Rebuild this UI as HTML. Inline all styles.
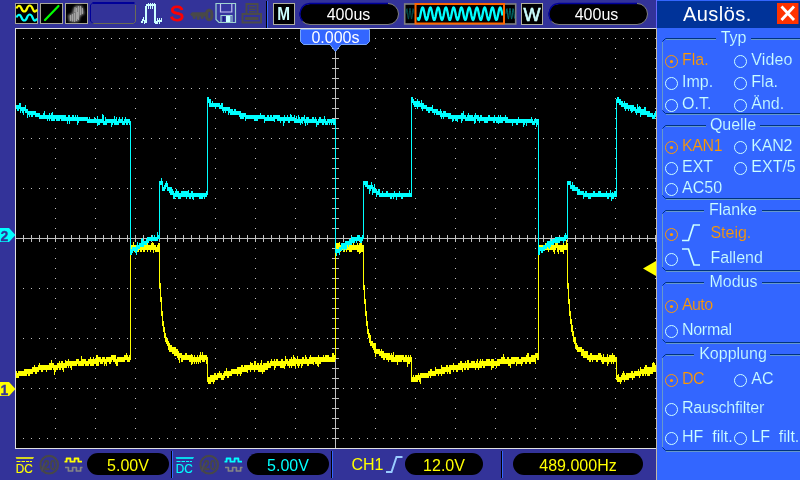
<!DOCTYPE html>
<html><head><meta charset="utf-8"><title>Scope</title>
<style>
html,body{margin:0;padding:0;}
body{width:800px;height:480px;overflow:hidden;background:#333399;position:relative;font-family:"Liberation Sans",Arial,sans-serif;font-size:16px;}
svg{position:absolute;left:0;top:0;will-change:transform;}
svg text{font-family:"Liberation Sans",Arial,sans-serif;font-size:16px;}
.lt{fill:#ccffff;stroke:#3366ff;stroke-width:0.15px;}
.on{fill:#ff9900;stroke:#3366ff;stroke-width:0.15px;}
.pill{position:absolute;background:#000;border-radius:11px;height:22px;box-sizing:border-box;text-align:center;line-height:22px;font-size:16px;}
.pill.top{border:1px solid;border-color:#000099 #808080 #808080 #000099;line-height:20px;color:#fff;}
.y{color:#ffff00;}
.c{color:#00ffff;}
</style></head><body>

<!-- right panel background -->
<div style="position:absolute;left:656px;top:0;width:144px;height:480px;background:#3366ff;"></div>
<div style="position:absolute;left:657px;top:1px;width:143px;height:27px;background:#003399;"></div>
<div style="position:absolute;left:656px;top:0;width:1px;height:28px;background:#6666ff;"></div>

<svg width="800" height="480" viewBox="0 0 800 480" shape-rendering="crispEdges">
  <rect x="15" y="28" width="641" height="421" fill="#e0e0e0"/>
  <rect x="16" y="29" width="640" height="419" fill="#000"/>
  <rect x="656" y="28" width="1" height="452" fill="#c0b8a8"/>
  <g stroke="#c0c0c0" stroke-width="1" fill="none">
    <path stroke-dasharray="1 7" d="M23 38.5H656M23 88.5H656M23 138.5H656M23 188.5H656M23 288.5H656M23 338.5H656M23 388.5H656M23 438.5H656"/>
    <path stroke-dasharray="1 9" d="M55.5 38V448M95.5 38V448M135.5 38V448M175.5 38V448M215.5 38V448M255.5 38V448M295.5 38V448M375.5 38V448M415.5 38V448M455.5 38V448M495.5 38V448M535.5 38V448M575.5 38V448M615.5 38V448M655.5 38V448"/>
    <path d="M16 238.5H656M335.5 29V448"/>
    <path stroke-dasharray="1 7" stroke-width="7" d="M23 238.5H656"/>
    <path stroke-dasharray="1 9" stroke-width="7" d="M335.5 38V448"/>
  </g>
  <path stroke="#ffff00" stroke-width="1" fill="none" d="M16.5 371V378M17.5 373V378M18.5 371V378M19.5 371V376M20.5 371V376M21.5 371V376M22.5 371V376M23.5 371V376M24.5 369V376M25.5 369V376M26.5 369V376M27.5 369V374M28.5 369V376M29.5 369V376M30.5 369V374M31.5 369V374M32.5 367V374M33.5 367V372M34.5 365V372M35.5 367V374M36.5 367V374M37.5 367V372M38.5 365V372M39.5 363V370M40.5 365V370M41.5 365V372M42.5 365V372M43.5 365V370M44.5 365V370M45.5 365V370M46.5 365V372M47.5 365V370M48.5 365V370M49.5 363V370M50.5 363V370M51.5 360V370M52.5 363V368M53.5 363V370M54.5 365V375M55.5 365V372M56.5 365V370M57.5 363V370M58.5 363V368M59.5 361V370M60.5 363V370M61.5 361V368M62.5 361V370M63.5 363V372M64.5 363V368M65.5 360V368M66.5 361V368M67.5 361V366M68.5 359V368M69.5 361V366M70.5 361V368M71.5 361V370M72.5 361V366M73.5 361V366M74.5 361V366M75.5 361V366M76.5 359V366M77.5 359V364M78.5 359V366M79.5 361V366M80.5 361V366M81.5 356V366M82.5 359V366M83.5 359V366M84.5 359V364M85.5 359V366M86.5 361V366M87.5 361V366M88.5 359V366M89.5 359V364M90.5 357V366M91.5 359V366M92.5 359V366M93.5 357V366M94.5 359V364M95.5 359V364M96.5 355V366M97.5 355V366M98.5 357V366M99.5 357V362M100.5 357V364M101.5 359V364M102.5 357V364M103.5 357V362M104.5 357V366M105.5 359V364M106.5 357V366M107.5 357V362M108.5 357V362M109.5 357V364M110.5 357V364M111.5 355V362M112.5 355V360M113.5 355V362M114.5 355V362M115.5 355V364M116.5 359V366M117.5 357V366M118.5 357V362M119.5 357V362M120.5 357V362M121.5 357V362M122.5 357V362M123.5 357V362M124.5 355V362M125.5 355V360M126.5 353V360M127.5 355V362M128.5 357V362M129.5 355V362M130.5 245V360M131.5 245V252M132.5 245V252M133.5 242V250M134.5 245V252M135.5 245V250M136.5 245V250M137.5 245V252M138.5 245V252M139.5 245V250M140.5 245V252M141.5 245V252M142.5 243V250M143.5 241V252M144.5 243V252M145.5 241V250M146.5 243V250M147.5 243V252M148.5 245V250M149.5 245V250M150.5 245V252M151.5 243V250M152.5 242V250M153.5 243V253M154.5 245V250M155.5 245V252M156.5 247V252M157.5 245V252M158.5 243V252M159.5 243V288M160.5 283V302M161.5 297V316M162.5 311V326M163.5 321V332M164.5 327V338M165.5 333V342M166.5 337V344M167.5 339V346M168.5 341V350M169.5 343V352M170.5 345V352M171.5 345V352M172.5 347V354M173.5 347V354M174.5 347V356M175.5 347V356M176.5 349V356M177.5 349V358M178.5 351V360M179.5 353V363M180.5 353V358M181.5 353V362M182.5 355V362M183.5 355V360M184.5 355V360M185.5 353V360M186.5 353V360M187.5 355V360M188.5 355V360M189.5 355V362M190.5 355V362M191.5 354V365M192.5 355V364M193.5 357V362M194.5 355V364M195.5 357V362M196.5 357V364M197.5 355V362M198.5 357V364M199.5 355V362M200.5 352V363M201.5 355V360M202.5 352V362M203.5 355V362M204.5 355V362M205.5 355V360M206.5 355V364M207.5 357V382M208.5 377V384M209.5 377V384M210.5 375V384M211.5 375V382M212.5 375V382M213.5 375V384M214.5 373V382M215.5 373V380M216.5 375V380M217.5 373V380M218.5 373V378M219.5 371V378M220.5 373V378M221.5 373V380M222.5 375V380M223.5 373V380M224.5 371V378M225.5 371V376M226.5 368V376M227.5 371V378M228.5 371V378M229.5 371V376M230.5 371V376M231.5 369V376M232.5 369V374M233.5 369V374M234.5 369V374M235.5 369V374M236.5 369V374M237.5 367V376M238.5 367V374M239.5 367V374M240.5 367V376M241.5 365V374M242.5 365V372M243.5 367V372M244.5 365V372M245.5 365V372M246.5 365V372M247.5 365V373M248.5 365V370M249.5 365V370M250.5 362V372M251.5 363V370M252.5 363V370M253.5 365V370M254.5 361V372M255.5 361V370M256.5 365V370M257.5 363V370M258.5 363V372M259.5 365V372M260.5 363V372M261.5 360V372M262.5 365V374M263.5 363V372M264.5 363V372M265.5 363V370M266.5 363V370M267.5 361V370M268.5 361V368M269.5 363V368M270.5 361V368M271.5 359V366M272.5 361V366M273.5 361V366M274.5 359V370M275.5 361V368M276.5 359V366M277.5 359V366M278.5 361V366M279.5 361V366M280.5 361V368M281.5 359V368M282.5 359V368M283.5 361V368M284.5 361V369M285.5 356V366M286.5 359V364M287.5 359V366M288.5 361V366M289.5 359V368M290.5 359V366M291.5 357V368M292.5 359V366M293.5 355V366M294.5 357V366M295.5 359V368M296.5 359V364M297.5 356V366M298.5 359V368M299.5 359V366M300.5 359V364M301.5 359V368M302.5 357V366M303.5 357V364M304.5 359V364M305.5 355V364M306.5 357V364M307.5 359V366M308.5 359V366M309.5 357V364M310.5 355V364M311.5 357V364M312.5 357V364M313.5 357V365M314.5 357V362M315.5 357V364M316.5 357V364M317.5 357V366M318.5 355V367M319.5 357V364M320.5 357V364M321.5 357V362M322.5 357V362M323.5 355V362M324.5 357V362M325.5 355V362M326.5 355V362M327.5 355V362M328.5 355V362M329.5 357V362M330.5 357V362M331.5 357V362M332.5 353V362M333.5 353V362M334.5 355V362M335.5 245V360M336.5 243V252M337.5 243V252M338.5 243V252M339.5 242V250M340.5 245V252M341.5 243V250M342.5 243V250M343.5 245V252M344.5 245V252M345.5 245V250M346.5 243V252M347.5 243V250M348.5 243V250M349.5 241V252M350.5 245V252M351.5 243V252M352.5 245V250M353.5 243V250M354.5 245V250M355.5 245V250M356.5 245V250M357.5 243V252M358.5 245V252M359.5 243V254M360.5 243V253M361.5 243V252M362.5 245V252M363.5 245V290M364.5 285V304M365.5 299V316M366.5 311V326M367.5 321V334M368.5 329V338M369.5 333V343M370.5 335V346M371.5 341V346M372.5 341V348M373.5 343V350M374.5 343V353M375.5 343V357M376.5 349V354M377.5 349V354M378.5 349V354M379.5 349V356M380.5 351V356M381.5 349V358M382.5 351V358M383.5 351V360M384.5 353V360M385.5 353V358M386.5 353V360M387.5 353V360M388.5 353V362M389.5 353V360M390.5 355V360M391.5 353V362M392.5 355V362M393.5 352V362M394.5 357V362M395.5 355V362M396.5 355V362M397.5 355V365M398.5 355V362M399.5 355V362M400.5 355V362M401.5 355V362M402.5 355V360M403.5 355V362M404.5 357V362M405.5 355V362M406.5 355V362M407.5 357V367M408.5 355V364M409.5 357V364M410.5 355V362M411.5 357V382M412.5 377V382M413.5 375V382M414.5 377V382M415.5 375V382M416.5 375V382M417.5 375V382M418.5 373V380M419.5 375V382M420.5 373V384M421.5 373V378M422.5 373V378M423.5 373V378M424.5 373V378M425.5 373V378M426.5 373V378M427.5 373V378M428.5 371V378M429.5 371V376M430.5 369V378M431.5 369V376M432.5 371V376M433.5 371V376M434.5 371V376M435.5 367V376M436.5 369V374M437.5 369V374M438.5 369V376M439.5 369V374M440.5 369V374M441.5 365V376M442.5 367V374M443.5 367V374M444.5 367V374M445.5 367V372M446.5 365V372M447.5 365V374M448.5 367V372M449.5 365V374M450.5 365V374M451.5 365V370M452.5 365V370M453.5 363V372M454.5 365V370M455.5 365V370M456.5 365V372M457.5 365V372M458.5 363V370M459.5 363V370M460.5 361V370M461.5 361V370M462.5 363V372M463.5 363V368M464.5 363V370M465.5 361V370M466.5 363V368M467.5 360V370M468.5 360V370M469.5 363V368M470.5 363V368M471.5 361V368M472.5 361V368M473.5 361V368M474.5 361V368M475.5 363V370M476.5 361V368M477.5 359V368M478.5 363V370M479.5 361V368M480.5 359V368M481.5 361V368M482.5 359V366M483.5 361V368M484.5 361V368M485.5 361V366M486.5 359V366M487.5 359V366M488.5 359V366M489.5 359V366M490.5 361V366M491.5 359V370M492.5 359V368M493.5 359V368M494.5 361V366M495.5 361V366M496.5 361V368M497.5 359V366M498.5 359V366M499.5 359V366M500.5 359V364M501.5 357V364M502.5 357V364M503.5 354V364M504.5 357V364M505.5 359V364M506.5 359V364M507.5 357V364M508.5 357V366M509.5 359V366M510.5 359V368M511.5 357V364M512.5 357V364M513.5 357V364M514.5 357V364M515.5 357V362M516.5 357V366M517.5 357V364M518.5 357V364M519.5 359V364M520.5 359V364M521.5 357V366M522.5 357V364M523.5 357V362M524.5 357V362M525.5 357V364M526.5 355V364M527.5 353V362M528.5 353V362M529.5 357V364M530.5 357V364M531.5 355V362M532.5 355V362M533.5 355V362M534.5 355V362M535.5 353V364M536.5 353V358M537.5 353V360M538.5 245V360M539.5 245V252M540.5 245V250M541.5 245V250M542.5 245V250M543.5 245V250M544.5 245V250M545.5 243V250M546.5 245V250M547.5 243V250M548.5 243V252M549.5 243V250M550.5 241V250M551.5 245V250M552.5 245V250M553.5 245V252M554.5 245V254M555.5 243V250M556.5 243V248M557.5 243V252M558.5 245V254M559.5 245V250M560.5 245V252M561.5 245V252M562.5 245V252M563.5 243V254M564.5 245V250M565.5 245V250M566.5 240V250M567.5 243V288M568.5 283V304M569.5 299V316M570.5 311V324M571.5 319V332M572.5 325V336M573.5 331V342M574.5 337V344M575.5 337V348M576.5 343V350M577.5 345V352M578.5 347V352M579.5 347V352M580.5 347V352M581.5 347V356M582.5 349V356M583.5 349V358M584.5 351V358M585.5 351V358M586.5 351V358M587.5 351V360M588.5 355V360M589.5 355V362M590.5 353V362M591.5 353V360M592.5 355V362M593.5 355V360M594.5 355V360M595.5 355V360M596.5 355V362M597.5 355V362M598.5 353V360M599.5 353V360M600.5 353V360M601.5 355V362M602.5 357V364M603.5 354V364M604.5 357V362M605.5 357V362M606.5 357V362M607.5 354V366M608.5 357V364M609.5 355V362M610.5 355V362M611.5 355V364M612.5 353V362M613.5 355V364M614.5 355V362M615.5 357V362M616.5 357V380M617.5 375V382M618.5 374V382M619.5 377V382M620.5 377V384M621.5 375V382M622.5 373V380M623.5 371V380M624.5 373V382M625.5 375V380M626.5 373V380M627.5 373V380M628.5 373V380M629.5 373V378M630.5 373V378M631.5 371V378M632.5 371V380M633.5 373V378M634.5 371V378M635.5 371V376M636.5 371V376M637.5 371V376M638.5 369V376M639.5 371V378M640.5 367V376M641.5 369V374M642.5 369V376M643.5 369V376M644.5 367V374M645.5 365V376M646.5 365V374M647.5 367V376M648.5 367V376M649.5 367V376M650.5 367V374M651.5 367V374M652.5 363V374M653.5 362V372M654.5 363V372M655.5 365V372"/>
  <path stroke="#00ffff" stroke-width="1" fill="none" d="M16.5 105V109M17.5 105V111M18.5 105V111M19.5 103V109M20.5 103V113M21.5 107V111M22.5 107V113M23.5 107V115M24.5 107V111M25.5 105V113M26.5 109V113M27.5 109V118M28.5 111V115M29.5 111V117M30.5 111V115M31.5 111V117M32.5 111V117M33.5 111V115M34.5 111V115M35.5 111V117M36.5 113V117M37.5 113V117M38.5 113V117M39.5 113V119M40.5 115V119M41.5 115V119M42.5 115V119M43.5 113V119M44.5 111V119M45.5 115V119M46.5 115V119M47.5 115V121M48.5 115V119M49.5 113V121M50.5 115V119M51.5 113V121M52.5 112V121M53.5 115V121M54.5 115V121M55.5 115V119M56.5 115V121M57.5 115V121M58.5 115V121M59.5 115V121M60.5 115V119M61.5 115V121M62.5 115V121M63.5 115V121M64.5 115V121M65.5 115V121M66.5 117V121M67.5 117V124M68.5 115V121M69.5 115V124M70.5 117V121M71.5 117V121M72.5 115V121M73.5 115V121M74.5 117V121M75.5 115V121M76.5 117V121M77.5 115V125M78.5 117V123M79.5 117V121M80.5 117V121M81.5 117V121M82.5 117V121M83.5 117V121M84.5 117V121M85.5 117V121M86.5 117V121M87.5 117V123M88.5 119V123M89.5 117V123M90.5 119V123M91.5 119V123M92.5 119V123M93.5 119V123M94.5 117V123M95.5 119V123M96.5 119V123M97.5 116V126M98.5 119V125M99.5 119V125M100.5 119V123M101.5 119V123M102.5 114V123M103.5 115V125M104.5 121V125M105.5 117V125M106.5 119V125M107.5 119V123M108.5 119V123M109.5 119V123M110.5 119V123M111.5 119V127M112.5 119V125M113.5 119V123M114.5 116V125M115.5 119V125M116.5 117V125M117.5 121V125M118.5 119V125M119.5 117V123M120.5 119V123M121.5 119V123M122.5 117V125M123.5 121V125M124.5 119V125M125.5 117V123M126.5 119V125M127.5 119V125M128.5 119V123M129.5 119V125M130.5 121V255M131.5 249V255M132.5 247V253M133.5 247V251M134.5 247V251M135.5 247V253M136.5 245V255M137.5 242V251M138.5 245V249M139.5 243V249M140.5 243V247M141.5 239V247M142.5 238V247M143.5 241V247M144.5 241V245M145.5 241V245M146.5 239V245M147.5 237V243M148.5 237V243M149.5 237V241M150.5 237V241M151.5 237V241M152.5 235V241M153.5 237V241M154.5 235V241M155.5 237V241M156.5 237V241M157.5 232V241M158.5 235V239M159.5 181V239M160.5 181V185M161.5 178V185M162.5 181V191M163.5 187V191M164.5 185V191M165.5 183V189M166.5 181V187M167.5 183V191M168.5 187V191M169.5 187V193M170.5 187V195M171.5 187V195M172.5 189V195M173.5 191V199M174.5 193V199M175.5 191V197M176.5 189V197M177.5 191V197M178.5 191V199M179.5 193V199M180.5 193V199M181.5 191V197M182.5 191V197M183.5 191V197M184.5 191V197M185.5 191V197M186.5 191V199M187.5 191V197M188.5 190V197M189.5 193V199M190.5 193V199M191.5 191V197M192.5 191V199M193.5 193V200M194.5 193V197M195.5 193V197M196.5 193V197M197.5 193V197M198.5 193V197M199.5 193V199M200.5 193V199M201.5 193V199M202.5 193V199M203.5 193V197M204.5 193V199M205.5 193V197M206.5 191V197M207.5 97V195M208.5 97V103M209.5 99V107M210.5 99V107M211.5 103V107M212.5 101V107M213.5 103V107M214.5 103V107M215.5 103V109M216.5 103V107M217.5 103V107M218.5 103V107M219.5 103V109M220.5 105V109M221.5 103V109M222.5 103V111M223.5 107V113M224.5 107V111M225.5 107V113M226.5 107V111M227.5 107V111M228.5 107V115M229.5 107V113M230.5 109V115M231.5 109V115M232.5 109V115M233.5 111V115M234.5 109V115M235.5 109V115M236.5 111V115M237.5 111V115M238.5 111V115M239.5 111V117M240.5 111V119M241.5 113V119M242.5 113V119M243.5 113V119M244.5 113V117M245.5 113V121M246.5 115V119M247.5 115V119M248.5 115V119M249.5 115V119M250.5 115V119M251.5 115V119M252.5 115V119M253.5 115V119M254.5 115V121M255.5 115V121M256.5 115V121M257.5 115V121M258.5 115V119M259.5 115V119M260.5 113V119M261.5 115V119M262.5 115V119M263.5 115V119M264.5 115V123M265.5 117V121M266.5 117V121M267.5 115V121M268.5 115V121M269.5 117V121M270.5 115V121M271.5 115V121M272.5 117V121M273.5 115V121M274.5 115V122M275.5 115V119M276.5 115V119M277.5 115V121M278.5 115V121M279.5 115V121M280.5 117V123M281.5 117V121M282.5 117V121M283.5 117V126M284.5 115V123M285.5 117V121M286.5 117V121M287.5 115V121M288.5 117V123M289.5 117V123M290.5 114V121M291.5 115V121M292.5 117V121M293.5 117V121M294.5 115V123M295.5 119V123M296.5 116V123M297.5 119V123M298.5 115V123M299.5 117V123M300.5 119V125M301.5 117V123M302.5 117V124M303.5 117V121M304.5 115V123M305.5 119V126M306.5 117V123M307.5 117V125M308.5 117V123M309.5 119V123M310.5 119V123M311.5 119V123M312.5 117V123M313.5 117V123M314.5 119V123M315.5 117V123M316.5 119V127M317.5 121V125M318.5 119V125M319.5 117V123M320.5 117V123M321.5 119V123M322.5 119V125M323.5 119V125M324.5 116V123M325.5 119V125M326.5 121V125M327.5 119V125M328.5 119V123M329.5 119V125M330.5 119V123M331.5 119V125M332.5 119V123M333.5 119V125M334.5 119V125M335.5 119V253M336.5 249V256M337.5 249V253M338.5 249V253M339.5 247V255M340.5 247V251M341.5 243V251M342.5 243V249M343.5 243V251M344.5 243V249M345.5 241V250M346.5 241V249M347.5 241V245M348.5 241V247M349.5 239V245M350.5 239V245M351.5 236V245M352.5 237V243M353.5 237V243M354.5 237V243M355.5 237V241M356.5 237V243M357.5 235V241M358.5 235V241M359.5 235V241M360.5 237V243M361.5 237V243M362.5 235V241M363.5 181V239M364.5 181V185M365.5 181V187M366.5 181V187M367.5 181V189M368.5 185V189M369.5 185V194M370.5 185V191M371.5 182V189M372.5 185V195M373.5 187V193M374.5 184V193M375.5 189V193M376.5 189V197M377.5 191V195M378.5 189V195M379.5 189V197M380.5 193V197M381.5 193V197M382.5 191V197M383.5 193V197M384.5 193V197M385.5 193V197M386.5 191V197M387.5 191V197M388.5 193V197M389.5 193V197M390.5 193V199M391.5 193V199M392.5 193V197M393.5 193V199M394.5 191V197M395.5 193V197M396.5 193V200M397.5 193V197M398.5 193V197M399.5 191V197M400.5 193V197M401.5 193V199M402.5 193V199M403.5 193V197M404.5 193V197M405.5 193V197M406.5 193V197M407.5 193V197M408.5 193V197M409.5 190V197M410.5 193V197M411.5 97V197M412.5 97V103M413.5 99V105M414.5 101V107M415.5 101V107M416.5 101V107M417.5 99V109M418.5 101V107M419.5 101V107M420.5 103V107M421.5 100V109M422.5 103V111M423.5 103V109M424.5 105V109M425.5 105V109M426.5 105V111M427.5 107V111M428.5 107V113M429.5 107V113M430.5 107V111M431.5 107V111M432.5 105V113M433.5 109V113M434.5 109V115M435.5 109V113M436.5 109V115M437.5 109V115M438.5 111V115M439.5 111V115M440.5 109V117M441.5 111V119M442.5 113V117M443.5 111V119M444.5 111V117M445.5 111V117M446.5 113V117M447.5 113V117M448.5 113V119M449.5 113V119M450.5 113V119M451.5 115V119M452.5 115V122M453.5 115V121M454.5 115V119M455.5 115V121M456.5 115V121M457.5 115V122M458.5 115V119M459.5 115V119M460.5 115V119M461.5 113V123M462.5 113V121M463.5 111V119M464.5 115V119M465.5 115V121M466.5 117V121M467.5 115V121M468.5 113V121M469.5 115V121M470.5 115V121M471.5 115V121M472.5 115V121M473.5 117V121M474.5 115V124M475.5 113V123M476.5 115V119M477.5 115V121M478.5 115V121M479.5 117V123M480.5 115V121M481.5 115V121M482.5 117V121M483.5 117V121M484.5 117V123M485.5 117V123M486.5 117V123M487.5 117V123M488.5 115V121M489.5 115V121M490.5 117V121M491.5 117V121M492.5 117V121M493.5 117V123M494.5 115V123M495.5 117V121M496.5 117V123M497.5 117V123M498.5 115V124M499.5 117V123M500.5 115V123M501.5 117V123M502.5 117V123M503.5 117V121M504.5 117V121M505.5 115V123M506.5 117V123M507.5 117V123M508.5 119V123M509.5 119V123M510.5 119V123M511.5 119V123M512.5 119V126M513.5 119V123M514.5 119V123M515.5 119V123M516.5 119V125M517.5 119V125M518.5 117V123M519.5 119V123M520.5 119V123M521.5 119V123M522.5 119V123M523.5 119V127M524.5 119V125M525.5 119V123M526.5 119V126M527.5 119V123M528.5 119V123M529.5 119V123M530.5 119V123M531.5 117V123M532.5 119V125M533.5 121V125M534.5 119V125M535.5 119V123M536.5 119V127M537.5 119V125M538.5 119V255M539.5 247V255M540.5 247V251M541.5 247V253M542.5 247V253M543.5 245V251M544.5 245V251M545.5 245V249M546.5 243V249M547.5 241V247M548.5 241V248M549.5 241V249M550.5 239V247M551.5 241V245M552.5 239V245M553.5 239V245M554.5 239V243M555.5 237V243M556.5 237V243M557.5 237V243M558.5 237V243M559.5 237V243M560.5 237V241M561.5 237V241M562.5 237V241M563.5 237V243M564.5 235V241M565.5 233V241M566.5 235V239M567.5 181V239M568.5 181V185M569.5 181V185M570.5 181V189M571.5 185V189M572.5 182V191M573.5 185V191M574.5 185V191M575.5 187V191M576.5 187V191M577.5 187V195M578.5 189V195M579.5 189V195M580.5 191V195M581.5 191V195M582.5 191V195M583.5 191V199M584.5 193V197M585.5 191V197M586.5 191V197M587.5 193V197M588.5 193V199M589.5 193V199M590.5 193V199M591.5 193V197M592.5 193V197M593.5 191V197M594.5 191V197M595.5 193V197M596.5 193V197M597.5 193V197M598.5 191V197M599.5 191V197M600.5 191V197M601.5 193V197M602.5 193V197M603.5 193V197M604.5 193V197M605.5 193V197M606.5 191V197M607.5 193V199M608.5 193V199M609.5 193V197M610.5 190V197M611.5 193V201M612.5 192V199M613.5 193V199M614.5 191V197M615.5 191V197M616.5 99V197M617.5 97V103M618.5 97V103M619.5 99V105M620.5 99V105M621.5 101V107M622.5 101V107M623.5 103V107M624.5 101V109M625.5 103V111M626.5 103V109M627.5 103V109M628.5 105V111M629.5 105V109M630.5 105V111M631.5 105V113M632.5 105V112M633.5 105V111M634.5 107V111M635.5 107V113M636.5 109V115M637.5 104V113M638.5 107V113M639.5 106V113M640.5 107V117M641.5 109V115M642.5 109V115M643.5 109V115M644.5 107V115M645.5 107V115M646.5 111V115M647.5 111V117M648.5 111V117M649.5 111V117M650.5 113V117M651.5 113V117M652.5 113V119M653.5 115V119M654.5 113V119M655.5 111V117"/>
  <g shape-rendering="auto">
  <!-- trigger level marker -->
  <polygon points="643,268.5 656,261 656,276" fill="#ffff00"/>
  <!-- trigger time label -->
  <polygon points="300.5,29.5 369.5,29.5 369.5,41.5 366.5,44.5 341,44.5 335.5,51.500 330,44.500 303.500,44.500 300.500,41.500" fill="#3366ff" stroke="#79a6f7" stroke-width="1"/>
  <text x="335.500" y="43" fill="#fff" text-anchor="middle">0.000s</text>
  <!-- channel markers -->
  <polygon points="0,228 9,228 15.5,235 9,242 0,242" fill="#00ffff"/>
  <text x="0.500" y="240.500" style="font-size:14px;font-weight:bold" fill="#333399" stroke="#333399" stroke-width="0.300">2</text>
  <polygon points="0,382 9,382 15.5,389 9,396 0,396" fill="#ffff00"/>
  <text x="0.500" y="394.500" style="font-size:14px;font-weight:bold" fill="#333399" stroke="#333399" stroke-width="0.300">1</text>
  </g>

  <!-- ===== top bar icons ===== -->
  <g id="topbar" shape-rendering="auto">
    <!-- icon 1 -->
    <rect x="15.5" y="3.5" width="22" height="20" fill="#000" stroke="#a8a898"/>
    <path d="M16.5 8.5C17.5 5.5 20 4.5 21.5 8.5S25.5 12.5 27 8.5S31 4.500 32.500 8.500S35.500 12.500 37 9.500" stroke="#ffff00" stroke-width="2.2" fill="none"/>
    <path d="M16.5 17.5C17.5 14.5 20 13.5 21.5 17.5S25.5 21.5 27 17.5S31 13.500 32.500 17.500S35.500 21.500 37 18.500" stroke="#00ffff" stroke-width="2.2" fill="none"/>
    <!-- icon 2 -->
    <rect x="40.500" y="3.500" width="22" height="20" fill="#000" stroke="#a8a898"/>
    <path d="M45 20L58.500 6" stroke="#00ff00" stroke-width="2.200" stroke-linecap="round"/>
    <!-- icon 3 -->
    <rect x="65.500" y="3.500" width="22" height="20" fill="#000" stroke="#a8a898"/>
    <defs><filter id="bl" x="-20%" y="-20%" width="140%" height="140%"><feGaussianBlur stdDeviation="0.9"/></filter></defs>
    <g filter="url(#bl)"><path d="M68 15L72 13.500L73.500 8L76 5.500L81.500 5.500L83.500 9L84.500 14L82 15L80 17L79 21.500L74 22.500L69 21.500Z" fill="#7c7c7c"/></g>
    <defs><filter id="bl2" x="-20%" y="-20%" width="140%" height="140%"><feGaussianBlur stdDeviation="0.45"/></filter></defs>
    <g filter="url(#bl2)" stroke="#b4b4b4" stroke-width="0.900" fill="none" opacity="0.800"><path d="M70.500 15V21M72.500 14V21.500M74.500 13V22M76.500 8V21M78.500 6V20M80.500 6V15M82.500 8V14M75 7V12M77.500 12V19"/></g>
    <!-- rounded empty box -->
    <path d="M92.500 23.500H133.500L135.500 21.500V5" stroke="#6b6b55" fill="none"/>
    <path d="M134.500 3H92.500" stroke="#000099" stroke-width="2" fill="none"/><path d="M93 2.500L90.500 5V21L93 23.500" stroke="#000099" stroke-width="1" fill="none"/>
    <!-- pulse icon -->
    <g fill="#ccffff" shape-rendering="crispEdges">
      <rect x="141" y="21" width="2" height="2"/><rect x="142" y="19" width="2" height="2"/><rect x="143" y="17" width="1" height="3"/><rect x="144" y="20" width="1" height="4"/>
      <rect x="145" y="6" width="2" height="17"/><rect x="146" y="4" width="10" height="2"/>
      <rect x="148" y="3" width="1" height="6"/><rect x="150" y="3" width="1" height="6"/><rect x="152" y="3" width="1" height="6"/><rect x="154" y="3" width="1" height="4"/>
      <rect x="154" y="6" width="2" height="17"/><rect x="155" y="21" width="2" height="3"/>
      <rect x="157" y="18" width="1" height="6"/><rect x="158" y="20" width="1" height="2"/><rect x="159" y="18" width="1" height="6"/><rect x="160" y="20" width="1" height="2"/><rect x="161" y="18" width="1" height="4"/>
    </g>
    <!-- S -->
    <text x="169.800" y="21" style="font-size:21.500px" fill="#ff0000" stroke="#ff0000" stroke-width="0.900">S</text>
    <!-- key -->
    <g fill="#494949">
      <path d="M190 14.300L192 12.200H206V16.600H203.600V18.800H200.800V16.600H199.600V19.800H196.800V16.600H195.600V18.800H192.800V16.600H192Z"/>
      <path d="M209.200 8.800C212 8.800 213.400 11 213.400 15S212 21.200 209.200 21.200S205 19 205 15S206.400 8.800 209.200 8.800ZM209.300 11.800C208.500 11.800 208.300 12.500 208.300 15S208.500 18.200 209.300 18.200S210.300 17.500 210.300 15S210.100 11.800 209.300 11.800Z" fill-rule="evenodd"/>
    </g>
    <!-- floppy -->
    <g>
      <path d="M216 3.500H235.500V22.500H219L216 19.500Z" fill="#3636a0" stroke="#9fd4d0" stroke-width="1.200"/>
      <path d="M220.500 4V12H231.800V4" fill="none" stroke="#c4c4f4" stroke-width="1.200"/>
      <path d="M221 22V15.500H232V22" fill="none" stroke="#9fd4d0" stroke-width="1.100"/>
      <rect x="226" y="16" width="4.500" height="6" fill="#ccffff"/>
      <rect x="223.200" y="16.500" width="1.300" height="4.500" fill="#111177"/>
    </g>
    <!-- printer -->
    <g fill="none" stroke="#4b4b4b">
      <path d="M246.500 13V4H257.500V13" stroke-width="2"/>
      <path d="M249 6.700H255.500M249 9.200H255.500M249 11.700H255.500" stroke-width="1.400"/>
      <rect x="242.500" y="14" width="18.500" height="8.500" stroke-width="2"/>
      <rect x="245" y="17" width="13.500" height="3" fill="#4b4b4b" stroke="none"/>
    </g>
    <!-- separator -->
    <rect x="266" y="1" width="1" height="27" fill="#000" shape-rendering="crispEdges"/>
    <rect x="267" y="1" width="1" height="27" fill="#3366ff" shape-rendering="crispEdges"/>
    <!-- M -->
    <rect x="273.500" y="3.500" width="21" height="21" fill="#000" stroke="#b0b0a0"/>
    <text x="277.300" y="20" textLength="12.800" lengthAdjust="spacingAndGlyphs" style="font-size:18px;font-weight:bold" fill="#ccffff">M</text>
    <!-- overview -->
    <rect x="404.700" y="4" width="111" height="20" fill="#000" stroke="#808080" stroke-width="1.600"/>
    <path d="M406.0 13.7L406.5 9.1L407.0 8.6L407.5 12.6L408.0 17.6L408.5 19.1L409.0 15.8L409.5 10.6L410.0 8.2L410.5 10.6L411.0 15.8L411.5 19.1L412.0 17.6L412.5 12.6L413.0 8.6L413.5 9.1L414.0 13.7" stroke="#005050" stroke-width="1" fill="none"/>
    <path d="M506.0 13.7L506.5 9.1L507.0 8.6L507.5 12.6L508.0 17.6L508.5 19.1L509.0 15.8L509.5 10.6L510.0 8.2L510.5 10.6L511.0 15.8L511.5 19.1L512.0 17.6L512.5 12.6L513.0 8.6L513.5 9.1L514.0 13.7L514.5 18.3L515.0 18.8" stroke="#007070" stroke-width="1" fill="none"/>
    <path d="M417.5 17.2L418.0 19.0L418.5 19.9L419.0 19.8L419.5 18.8L420.0 16.9L420.5 14.5L421.0 12.0L421.5 9.7L422.0 8.1L422.5 7.4L423.0 7.7L423.5 9.0L424.0 11.0L424.5 13.5L425.0 16.0L425.5 18.1L426.0 19.5L426.5 20.0L427.0 19.4L427.5 18.0L428.0 15.8L428.5 13.3L429.0 10.8L429.5 8.9L430.0 7.7L430.5 7.4L431.0 8.2L431.5 9.9L432.0 12.2L432.5 14.7L433.0 17.1L433.5 18.9L434.0 19.9L434.5 19.9L435.0 18.8L435.5 17.0L436.0 14.6L436.5 12.1L437.0 9.8L437.5 8.2L438.0 7.4L438.5 7.7L439.0 8.9L439.5 10.9L440.0 13.4L440.5 15.9L441.0 18.0L441.5 19.5L442.0 20.0L442.5 19.5L443.0 18.0L443.5 15.9L444.0 13.4L444.5 10.9L445.0 8.9L445.5 7.7L446.0 7.4L446.5 8.2L447.0 9.8L447.5 12.1L448.0 14.6L448.5 17.0L449.0 18.8L449.5 19.9L450.0 19.9L450.5 18.9L451.0 17.1L451.5 14.7L452.0 12.2L452.5 9.9L453.0 8.2L453.5 7.4L454.0 7.7L454.5 8.9L455.0 10.9L455.5 13.3L456.0 15.8L456.5 18.0L457.0 19.5L457.5 20.0L458.0 19.5L458.5 18.1L459.0 16.0L459.5 13.5L460.0 11.0L460.5 9.0L461.0 7.7L461.5 7.4L462.0 8.1L462.5 9.7L463.0 12.0L463.5 14.5L464.0 16.9L464.5 18.8L465.0 19.8L465.5 19.9L466.0 19.0L466.5 17.2L467.0 14.8L467.5 12.3L468.0 10.0L468.5 8.3L469.0 7.5L469.5 7.6L470.0 8.8L470.5 10.8L471.0 13.2L471.5 15.7L472.0 17.9L472.5 19.4L473.0 20.0L473.5 19.6L474.0 18.2L474.5 16.1L475.0 13.6L475.5 11.1L476.0 9.1L476.5 7.8L477.0 7.4L477.5 8.1L478.0 9.7L478.5 11.9L479.0 14.4L479.5 16.8L480.0 18.7L480.5 19.8L481.0 19.9L481.5 19.0L482.0 17.2L482.5 14.9L483.0 12.4L483.5 10.1L484.0 8.3L484.5 7.5L485.0 7.6L485.5 8.7L486.0 10.7L486.5 13.1L487.0 15.6L487.5 17.8L488.0 19.4L488.5 20.0L489.0 19.6L489.5 18.3L490.0 16.2L490.5 13.7L491.0 11.2L491.5 9.1L492.0 7.8L492.5 7.4L493.0 8.0L493.5 9.6L494.0 11.8L494.5 14.3L495.0 16.7L495.5 18.7L496.0 19.8L496.5 19.9L497.0 19.1L497.5 17.3L498.0 15.0L498.5 12.5L499.0 10.1L499.5 8.4L500.0 7.5L500.5 7.6L501.0 8.7L501.5 10.6L502.0 13.0L502.5 15.5" stroke="#00ffff" stroke-width="2.300" fill="none" stroke-linejoin="round"/>
    <rect x="415.500" y="4" width="88.500" height="19.500" fill="none" stroke="#ff6600" stroke-width="2"/>
    <!-- W -->
    <rect x="521.500" y="3.500" width="21" height="21" fill="#000" stroke="#b0b0a0"/>
    <text x="532" y="20.500" text-anchor="middle" style="font-size:18px" fill="#ccffff" stroke="#ccffff" stroke-width="0.600">W</text>
  </g>

  <!-- ===== bottom bar icons ===== -->
  <g id="botbar" shape-rendering="crispEdges">
    <g shape-rendering="auto">
<path d="M16 457.5H33.5L33 458.5H16.5Z" fill="#ffff00" stroke="#ffff00" stroke-width="0.6"/>
<path d="M16.5 461.5H20.5M21.5 461.5H25M26 461.5H29M29.8 461.5H32" stroke="#ffff00" stroke-width="1"/>
<text x="15.7" y="473" style="font-size:12px" fill="#ffff00" stroke="#ffff00" stroke-width="0.15" textLength="17" lengthAdjust="spacingAndGlyphs">DC</text>
<circle cx="49.2" cy="464.7" r="8.8" fill="none" stroke="#484848" stroke-width="2.2"/>
<path d="M41.7 471.5L44.7 462.5" stroke="#4d4d4d" stroke-width="1.8"/>
<text x="43.5" y="470" style="font-size:15px;font-weight:bold" fill="#484848" stroke="#484848" stroke-width="0.5" textLength="12.4" lengthAdjust="spacingAndGlyphs">20</text>
<path d="M64.5 461.7H66.6V458.5H70.4V461.7H74.6V458.5H78.4V461.7H82" stroke="#ffff00" stroke-width="1.8" fill="none" stroke-linejoin="round"/>
<path d="M65 467.5H68.4V471H72.6V467.5H76.4V471H80.6V467.5H82.5" stroke="#858585" stroke-width="1.7" fill="none" stroke-linejoin="round"/>
</g><g shape-rendering="auto">
<path d="M176 457.5H193.5L193 458.5H176.5Z" fill="#00ffff" stroke="#00ffff" stroke-width="0.6"/>
<path d="M176.5 461.5H180.5M181.5 461.5H185M186 461.5H189M189.8 461.5H192" stroke="#00ffff" stroke-width="1"/>
<text x="175.7" y="473" style="font-size:12px" fill="#00ffff" stroke="#00ffff" stroke-width="0.15" textLength="17" lengthAdjust="spacingAndGlyphs">DC</text>
<circle cx="209.2" cy="464.7" r="8.8" fill="none" stroke="#484848" stroke-width="2.2"/>
<path d="M201.7 471.5L204.7 462.5" stroke="#4d4d4d" stroke-width="1.8"/>
<text x="203.5" y="470" style="font-size:15px;font-weight:bold" fill="#484848" stroke="#484848" stroke-width="0.5" textLength="12.4" lengthAdjust="spacingAndGlyphs">20</text>
<path d="M224.5 461.7H226.6V458.5H230.4V461.7H234.6V458.5H238.4V461.7H242" stroke="#00ffff" stroke-width="1.8" fill="none" stroke-linejoin="round"/>
<path d="M225 467.5H228.4V471H232.6V467.5H236.4V471H240.6V467.5H242.5" stroke="#858585" stroke-width="1.7" fill="none" stroke-linejoin="round"/>
</g>
    <rect x="171" y="451" width="1" height="27" fill="#000"/><rect x="172" y="451" width="1" height="27" fill="#3366ff"/>
    <rect x="331" y="451" width="1" height="27" fill="#000"/><rect x="332" y="451" width="1" height="27" fill="#3366ff"/>
    <rect x="501" y="451" width="1" height="27" fill="#000"/><rect x="502" y="451" width="1" height="27" fill="#3366ff"/>
    <path d="M386 472H391.500L396.500 457H402.500" stroke="#99ccff" stroke-width="2" fill="none" shape-rendering="auto"/>
  </g>

  <!-- ===== panel ===== -->
  <g id="panel" shape-rendering="auto">
    <text x="683" y="20.500" style="font-size:20px;letter-spacing:0.45px" fill="#fff">Auslös.</text>
    <rect x="777" y="3" width="21.500" height="21" fill="#ff3300"/>
    <path d="M781.500 6.500L794 20M794 6.500L781.500 20" stroke="#fff" stroke-width="2.800"/>
    <path d="M716 38.5H665.5L662.5 41.5M751 38.5H800M662.5 110.5L665.5 113.5H800M706 125.5H665.5L662.5 128.5M760 125.5H800M662.5 195.5L665.5 198.5H800M704 210.5H665.5L662.5 213.5M762 210.5H800M662.5 267.5L665.5 270.5H800M704 282.5H665.5L662.5 285.5M762 282.5H800M662.5 339.5L665.5 342.5H800M694 354.5H665.5L662.5 357.5M770 354.5H800M662.5 447.5L665.5 450.5H800" stroke="#003380" fill="none"/>
<path d="M716 39.5H666M751 39.5H800M662.5 42V110M666 114.5H800M706 126.5H666M760 126.5H800M662.5 129V195M666 199.5H800M704 211.5H666M762 211.5H800M662.5 214V267M666 271.5H800M704 283.5H666M762 283.5H800M662.5 286V339M666 343.5H800M694 355.5H666M770 355.5H800M662.5 358V447M666 451.5H800" stroke="#6699cc" fill="none"/>
<text x="733.6" y="43.2" text-anchor="middle" class="lt">Typ</text>
<text x="733" y="130.2" text-anchor="middle" class="lt">Quelle</text>
<text x="733" y="215.2" text-anchor="middle" class="lt">Flanke</text>
<text x="733.5" y="287.2" text-anchor="middle" class="lt">Modus</text>
<text x="733" y="359.2" text-anchor="middle" class="lt">Kopplung</text>
<circle cx="671.5" cy="61.5" r="6" fill="none" stroke="#ff9900"/>
<circle cx="671.5" cy="61.5" r="1.6" fill="#ff9900"/>
<text x="682.0" y="64.7" class="on" xml:space="preserve">Fla.</text>
<circle cx="740.5" cy="61.5" r="6" fill="none" stroke="#ccffff"/>
<text x="751.3" y="64.7" class="lt" style="letter-spacing:0.1px" xml:space="preserve">Video</text>
<circle cx="671.5" cy="83.5" r="6" fill="none" stroke="#ccffff"/>
<text x="682.0" y="86.7" class="lt" xml:space="preserve">Imp.</text>
<circle cx="740.5" cy="83.5" r="6" fill="none" stroke="#ccffff"/>
<text x="751.3" y="86.7" class="lt" xml:space="preserve">Fla.</text>
<circle cx="671.5" cy="105.5" r="6" fill="none" stroke="#ccffff"/>
<text x="682.0" y="108.7" class="lt" xml:space="preserve">O.T.</text>
<circle cx="740.5" cy="105.5" r="6" fill="none" stroke="#ccffff"/>
<text x="751.3" y="108.7" class="lt" xml:space="preserve">Änd.</text>
<circle cx="671.5" cy="147.5" r="6" fill="none" stroke="#ff9900"/>
<circle cx="671.5" cy="147.5" r="1.6" fill="#ff9900"/>
<text x="682.0" y="150.7" class="on" style="letter-spacing:-0.4px" xml:space="preserve">KAN1</text>
<circle cx="740.5" cy="147.5" r="6" fill="none" stroke="#ccffff"/>
<text x="751.3" y="150.7" class="lt" style="letter-spacing:-0.2px" xml:space="preserve">KAN2</text>
<circle cx="671.5" cy="168.5" r="6" fill="none" stroke="#ccffff"/>
<text x="682.0" y="171.7" class="lt" xml:space="preserve">EXT</text>
<circle cx="740.5" cy="168.5" r="6" fill="none" stroke="#ccffff"/>
<text x="751.3" y="171.7" class="lt" xml:space="preserve">EXT/5</text>
<circle cx="671.5" cy="189.5" r="6" fill="none" stroke="#ccffff"/>
<text x="682.0" y="192.7" class="lt" xml:space="preserve">AC50</text>
<circle cx="671.5" cy="234.5" r="6" fill="none" stroke="#ff9900"/>
<circle cx="671.5" cy="234.5" r="1.6" fill="#ff9900"/>
<text x="710.4" y="237.7" class="on" xml:space="preserve">Steig.</text>
<circle cx="671.5" cy="259.5" r="6" fill="none" stroke="#ccffff"/>
<text x="710.4" y="262.7" class="lt" xml:space="preserve">Fallend</text>
<circle cx="671.5" cy="306.5" r="6" fill="none" stroke="#ff9900"/>
<circle cx="671.5" cy="306.5" r="1.6" fill="#ff9900"/>
<text x="682.0" y="309.7" class="on" style="letter-spacing:-0.6px" xml:space="preserve">Auto</text>
<circle cx="671.5" cy="331.5" r="6" fill="none" stroke="#ccffff"/>
<text x="682.0" y="334.7" class="lt" style="letter-spacing:-0.3px" xml:space="preserve">Normal</text>
<circle cx="671.5" cy="380.5" r="6" fill="none" stroke="#ff9900"/>
<circle cx="671.5" cy="380.5" r="1.6" fill="#ff9900"/>
<text x="682.0" y="383.7" class="on" style="letter-spacing:-0.5px" xml:space="preserve">DC</text>
<circle cx="740.5" cy="380.5" r="6" fill="none" stroke="#ccffff"/>
<text x="751.3" y="383.7" class="lt" xml:space="preserve">AC</text>
<circle cx="671.5" cy="409.5" r="6" fill="none" stroke="#ccffff"/>
<text x="682.0" y="412.7" class="lt" style="letter-spacing:-0.2px" xml:space="preserve">Rauschfilter</text>
<circle cx="671.5" cy="438.5" r="6" fill="none" stroke="#ccffff"/>
<text x="682.0" y="441.7" class="lt" xml:space="preserve">HF  filt.</text>
<circle cx="740.5" cy="438.5" r="6" fill="none" stroke="#ccffff"/>
<text x="751.3" y="441.7" class="lt" xml:space="preserve">LF  filt.</text>
<path d="M682 240.5H688.5L693.5 225H700" stroke="#ccffff" stroke-width="1.7" fill="none"/>
<path d="M682 249H688.5L694 265H700" stroke="#ccffff" stroke-width="1.7" fill="none"/>
  </g>

  <!-- ===== pills ===== -->
  <g id="pills" shape-rendering="auto">
    <rect x="299.5" y="3.5" width="99" height="21" rx="10.5" fill="#000" stroke="#808080"/>
    <path d="M310 3.500H388M302.600 21A10.500 10.500 0 0 1 310 3.500" stroke="#000099" stroke-width="1.500" fill="none"/>
    <text x="348.500" y="20" text-anchor="middle" fill="#fff">400us</text>
    <rect x="548.500" y="3.500" width="99" height="21" rx="10.500" fill="#000" stroke="#808080"/>
    <path d="M559 3.500H637M551.600 21A10.500 10.500 0 0 1 559 3.500" stroke="#000099" stroke-width="1.500" fill="none"/>
    <text x="596.500" y="20" text-anchor="middle" fill="#fff">400us</text>
    <rect x="87" y="453" width="82" height="22" rx="11" fill="#000"/>
    <text x="128" y="471" text-anchor="middle" fill="#ffff00">5.00V</text>
    <rect x="247" y="453" width="82" height="22" rx="11" fill="#000"/>
    <text x="288" y="471" text-anchor="middle" fill="#00ffff">5.00V</text>
    <rect x="405" y="453" width="78" height="22" rx="11" fill="#000"/>
    <text x="444" y="471" text-anchor="middle" fill="#ffff00">12.0V</text>
    <rect x="513" y="453" width="130" height="22" rx="11" fill="#000"/>
    <text x="578" y="471" text-anchor="middle" fill="#ffff00">489.000Hz</text>
    <text x="351.500" y="470" fill="#ffff00">CH1</text>
  </g>
</svg>

</body></html>
